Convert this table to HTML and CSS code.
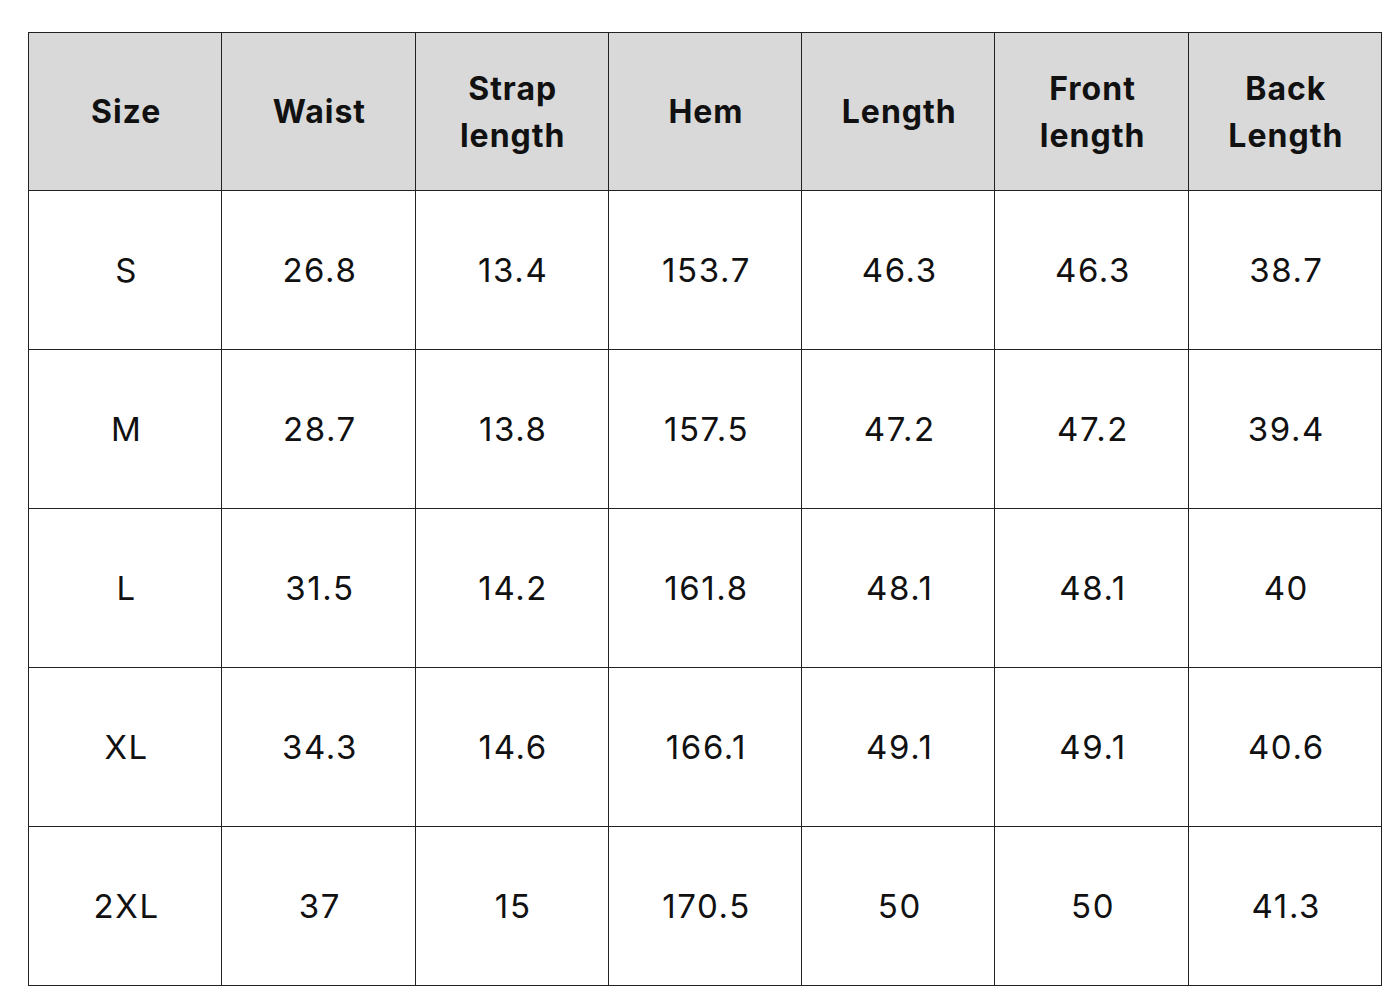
FILE: index.html
```html
<!DOCTYPE html>
<html>
<head>
<meta charset="utf-8">
<link rel="stylesheet" href="styles.css">
</head>
<body>
<table class="size-table">
  <thead>
    <tr>
      <th>Size</th>
      <th>Waist</th>
      <th>Strap<br>length</th>
      <th>Hem</th>
      <th>Length</th>
      <th>Front<br>length</th>
      <th>Back<br>Length</th>
    </tr>
  </thead>
  <tbody>
    <tr><td>S</td><td>26.8</td><td>13.4</td><td>153.7</td><td>46.3</td><td>46.3</td><td>38.7</td></tr>
    <tr><td>M</td><td>28.7</td><td>13.8</td><td>157.5</td><td>47.2</td><td>47.2</td><td>39.4</td></tr>
    <tr><td>L</td><td>31.5</td><td>14.2</td><td>161.8</td><td>48.1</td><td>48.1</td><td>40</td></tr>
    <tr><td>XL</td><td>34.3</td><td>14.6</td><td>166.1</td><td>49.1</td><td>49.1</td><td>40.6</td></tr>
    <tr><td>2XL</td><td>37</td><td>15</td><td>170.5</td><td>50</td><td>50</td><td>41.3</td></tr>
  </tbody>
</table>
</body>
</html>
```
FILE: styles.css
```css
html, body {
  margin: 0;
  padding: 0;
  background: #ffffff;
}
body {
  padding: 32px 0 0 28px;
  font-family: Inter, "Liberation Sans", sans-serif;
  color: #111;
}
.size-table {
  border-collapse: collapse;
  table-layout: fixed;
  width: 1354px;
}
.size-table th,
.size-table td {
  border: 1.5px solid #222;
  text-align: center;
  vertical-align: middle;
}
.size-table th {
  background: #d9d9d9;
  height: 157px;
  padding: 0 0 0 2px;
  font-size: 32px;
  font-weight: 700;
  line-height: 47px;
  letter-spacing: 1px;
}
.size-table td {
  height: 158px;
  padding: 0 0 0 3px;
  font-size: 33px;
  font-weight: 400;
  letter-spacing: 1.6px;
}
```
